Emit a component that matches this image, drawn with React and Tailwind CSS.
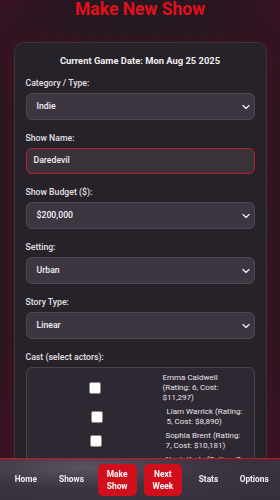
import React from "react";

function Chevron() {
  return (
    <svg className="pointer-events-none absolute right-[5px] top-1/2 -translate-y-1/2" width="8" height="5" viewBox="0 0 8 5" fill="none">
      <path d="M1 1 L4 4 L7 1" stroke="#e8e4ea" strokeWidth="1.4" strokeLinecap="round" strokeLinejoin="round" />
    </svg>
  );
}

function SelectField({ label, value }) {
  return (
    <div className="flex flex-col">
      <label className="text-[8.7px] leading-[12px] font-medium text-[#e4e0e6] mb-[4px]">{label}</label>
      <div className="relative">
        <div className="h-[27px] rounded-[6px] bg-[#3d3641] border border-[#4f4854] flex items-center pl-[10px] text-[8.7px] text-[#f2eff3] font-medium">
          {value}
        </div>
        <Chevron />
      </div>
    </div>
  );
}

const cast = [
  { name: "Emma Caldwell (Rating: 6, Cost: $11,297)", w: "w-[83px]" },
  { name: "Liam Warrick (Rating: 5, Cost: $8,890)", w: "w-[79px]" },
  { name: "Sophia Brent (Rating: 7, Cost: $10,181)", w: "w-[80px]" },
  { name: "Noah Kade (Rating: 7, Cost: $9,402)", w: "w-[80px]" },
];

export default function App() {
  return (
    <div
      className="min-h-screen h-[500px] overflow-hidden bg-[radial-gradient(ellipse_at_50%_45%,#221a21_45%,#2c1520_75%,#3e1226_100%)] text-white"
      style={{ fontFamily: "Roboto, 'Noto Sans', sans-serif" }}
    >
      <h1 className="text-center text-[17.5px] leading-[20px] font-bold text-[#e0111c] -mt-[1px]">Make New Show</h1>

      <div className="mx-auto mt-[23px] w-[253px] rounded-[10px] bg-[#27222a] border border-[#3a343d] shadow-[0_0_18px_rgba(160,15,40,0.25)] px-[11px] pt-[12px] pb-[60px]">
        <p className="text-center text-[9.4px] leading-[12px] font-bold text-[#f0edf1]">Current Game Date: Mon Aug 25 2025</p>

        <div className="mt-[10px] flex flex-col gap-[12px]">
          <SelectField label="Category / Type:" value="Indie" />

          <div className="flex flex-col">
            <label className="text-[8.7px] leading-[12px] font-medium text-[#e4e0e6] mb-[4px]">Show Name:</label>
            <div className="h-[26px] rounded-[6px] bg-[#3a3239] border-[1.5px] border-[#b3202f] flex items-center pl-[7px] text-[8.7px] text-[#f2eff3] font-medium">
              Daredevil
            </div>
          </div>

          <SelectField label="Show Budget ($):" value="$200,000" />
          <SelectField label="Setting:" value="Urban" />
          <SelectField label="Story Type:" value="Linear" />

          <div className="flex flex-col">
            <label className="text-[8.7px] leading-[12px] font-medium text-[#e4e0e6] mb-[4px]">Cast (select actors):</label>
            <div className="rounded-[6px] bg-[#2e2832] border border-[#4a434e] px-[8px] pt-[5px] pb-[10px] flex flex-col gap-[4px]">
              {cast.map((c) => (
                <label key={c.name} className="flex items-center gap-[8px]">
                  <span className="flex-1 min-w-0 flex justify-center">
                    <span className="w-[12px] h-[12px] bg-white border border-[#8a8a8a] rounded-[2px]" />
                  </span>
                  <span className={`${c.w} shrink-0 text-[8px] leading-[10px] text-[#e8e4ea]`}>{c.name}</span>
                </label>
              ))}
            </div>
          </div>
        </div>
      </div>

      <nav className="fixed bottom-0 left-0 right-0 h-[42px] border-t border-[#d0121f] bg-[radial-gradient(ellipse_at_30%_20%,#5a5260_0%,#3c3441_45%,#352d3a_100%)] grid grid-cols-6 items-center px-[3px]">
        <span className="text-center text-[8.3px] font-bold text-[#f3f0f4]">Home</span>
        <span className="text-center text-[8.3px] font-bold text-[#f3f0f4]">Shows</span>
        <span className="flex justify-center">
          <span className="w-[39px] h-[32px] rounded-[5px] bg-[#d10f1c] flex items-center justify-center text-center text-[8.4px] leading-[12px] font-bold text-white">Make Show</span>
        </span>
        <span className="flex justify-center">
          <span className="w-[38px] h-[32px] rounded-[5px] bg-[#d10f1c] flex items-center justify-center text-center text-[8.4px] leading-[12px] font-bold text-white">Next Week</span>
        </span>
        <span className="text-center text-[8.3px] font-bold text-[#f3f0f4]">Stats</span>
        <span className="text-center text-[8.3px] font-bold text-[#f3f0f4]">Options</span>
      </nav>
    </div>
  );
}
